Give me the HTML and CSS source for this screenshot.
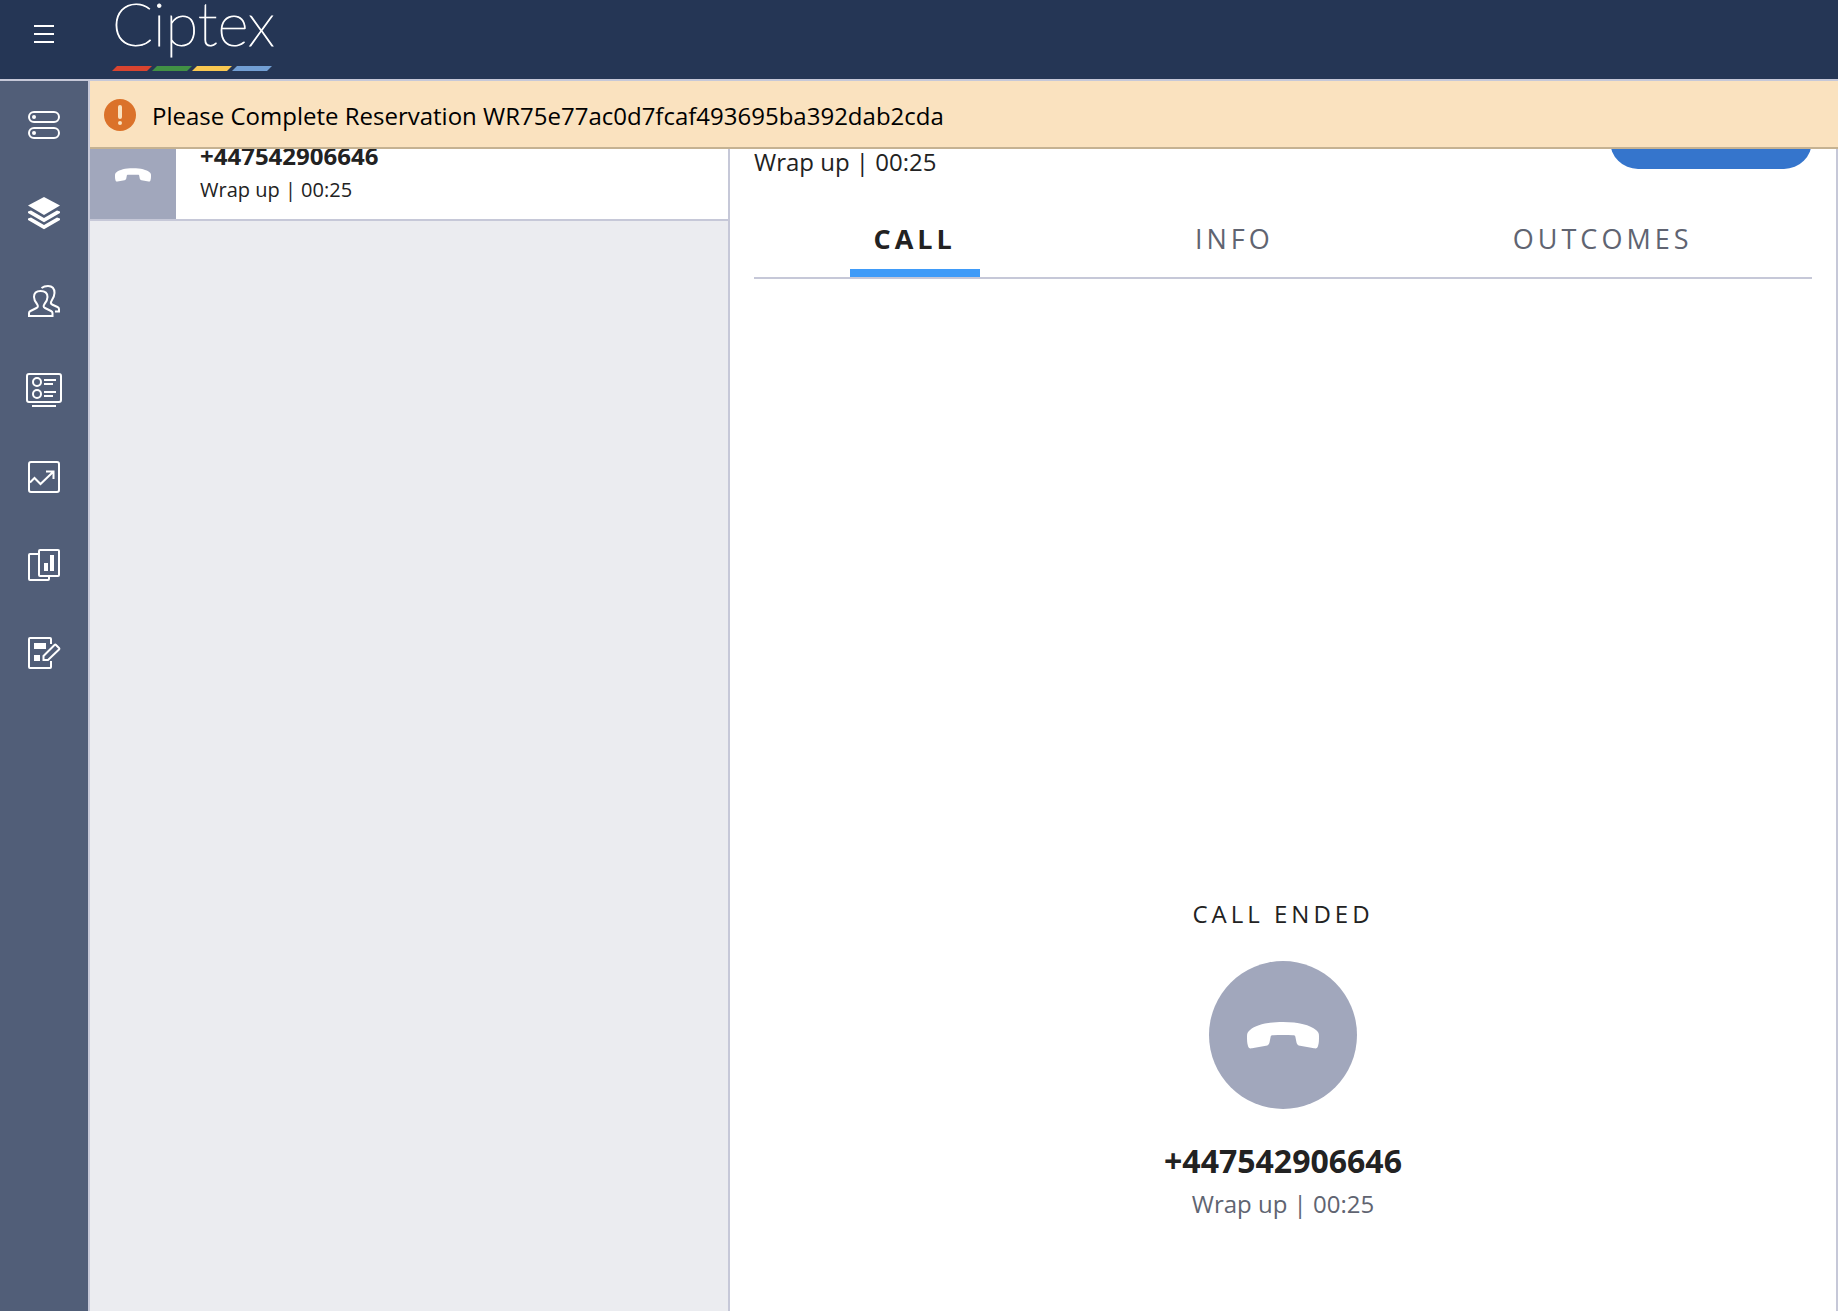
FILE: index.html
```html
<!DOCTYPE html>
<html lang="en">
<head>
    <meta charset="UTF-8">
    <meta name="viewport" content="width=device-width, initial-scale=1.0">
    <title>Ciptex Agent Desktop</title>
    <link rel="stylesheet" href="styles.css">
</head>
<body>

    <svg class="symbols" aria-hidden="true">
        <symbol id="hangup" viewBox="0 0 72 27">
            <path d="M0 14C0 11 1 9.500 3 8C9 3 20 0 36 0S63 3 69 8C71 9.500 72 11 72 14C72 18 72 21 71 24C70.500 26 69.500 26.800 67 26.300L53 23.800C51 23.400 50 22.500 49.500 20.500L48.300 14.500C48 13.500 47.500 13.300 46 13.200C40 12.900 32 12.900 26 13.200C24.500 13.300 24 13.500 23.700 14.500L22.500 20.500C22 22.500 21 23.400 19 23.800L5 26.300C2.500 26.800 1.500 26 1 24C0 21 0 18 0 14Z" fill="currentColor"/>
        </symbol>
    </svg>

    <header class="topbar">
        <button class="menu-button" aria-label="Open menu">
            <span></span>
            <span></span>
            <span></span>
        </button>
        <a class="logo" href="#">
            <span class="logo-name">Ciptex</span>
            <svg class="logo-strip" viewBox="0 0 160 5" aria-hidden="true">
                <path d="M5 0h35l-5 5H0z" fill="#d9442f"/>
                <path d="M45 0h35l-5 5H40z" fill="#419144"/>
                <path d="M85 0h35l-5 5H80z" fill="#f9c851"/>
                <path d="M125 0h35l-5 5H120z" fill="#729fd4"/>
            </svg>
        </a>
    </header>

    <div class="workspace">
        <nav class="sidebar" aria-label="Main">
            <a href="#" aria-label="Overview">
                <svg viewBox="0 0 36 36">
                    <rect x="3" y="5" width="30" height="10" rx="5"/>
                    <rect x="3" y="21" width="30" height="10" rx="5"/>
                    <circle class="solid" cx="8" cy="10" r="2"/>
                    <circle class="solid" cx="8" cy="26" r="2"/>
                </svg>
            </a>
            <a href="#" aria-label="Tasks" aria-current="page">
                <svg viewBox="0 0 36 36">
                    <path class="solid" d="M18 2l16 8.500-16 9.500L2 10.500z"/>
                    <path class="solid" d="M2 16.500L5 15.500 18 23l13-7.500 3 1v1.500L18 27.300 2 18z"/>
                    <path class="solid" d="M2 23.500L5 22.500 18 30l13-7.500 3 1V25L18 34.300 2 25z"/>
                </svg>
            </a>
            <a href="#" aria-label="Teams">
                <svg viewBox="0 0 36 36">
                    <path d="M3 33v-3c0-1 .5-1.500 1.500-2l6-3c2-1 1.500-2.500.5-4-2.500-3-3-5-3-7C8 10 10.500 8 14.500 8S21.500 10 21.500 14c0 2-.5 4-3 7-1 1.500-1.500 3 .5 4l6 3c1 .5 1.500 1 1.500 2v3z"/>
                    <path d="M15.500 5c2-1.500 4-2 6.500-2 4 0 6.500 2 6.500 7 0 2.500-1 5-3 8-1 1.500-1 2.500.5 3.500l5.500 2.500c1 .5 1.500 1 1.500 2v2.500H29"/>
                </svg>
            </a>
            <a href="#" aria-label="Queues">
                <svg viewBox="0 0 36 36">
                    <rect x="1" y="3" width="34" height="28" rx="2"/>
                    <circle cx="11" cy="11" r="4"/>
                    <circle cx="11" cy="23" r="4"/>
                    <path d="M18 9h12M18 13h9M18 21h12M18 25h9M6 35h24"/>
                </svg>
            </a>
            <a href="#" aria-label="Insights">
                <svg viewBox="0 0 36 36">
                    <rect x="3" y="3" width="30" height="30" rx="2"/>
                    <path d="M4 23.500l4.500-4.500 6 6L27 13M20 12.500h7.500V20"/>
                </svg>
            </a>
            <a href="#" aria-label="Reports">
                <svg viewBox="0 0 36 36">
                    <rect x="13" y="3" width="20" height="26" rx="1"/>
                    <path d="M12 7H4c-.6 0-1 .4-1 1v24c0 .6.4 1 1 1h18c.6 0 1-.4 1-1v-3"/>
                    <path class="solid" d="M18 16h4v8h-4zM24 8h4v16h-4z"/>
                </svg>
            </a>
            <a href="#" aria-label="Questionnaires">
                <svg viewBox="0 0 36 36">
                    <path d="M25 9V4c0-.6-.4-1-1-1H4c-.6 0-1 .4-1 1v28c0 .6.4 1 1 1h20c.6 0 1-.4 1-1v-6"/>
                    <path d="M17.500 25v-4L28.500 10c.6-.5 1-.5 1.500 0l3 3c.5.5.5 1 0 1.500L22 25z"/>
                    <path class="solid" d="M8 8h12v6H8zM8 20h6v6H8z"/>
                </svg>
            </a>
        </nav>

        <main class="desktop">
            <div class="notification" role="alert">
                <svg class="notification-icon" viewBox="0 0 32 32" aria-hidden="true">
                    <circle cx="16" cy="16" r="16" fill="#db722a"/>
                    <path d="M16 8v10" stroke="#fae2bf" stroke-width="4" stroke-linecap="round"/>
                    <circle cx="16" cy="24" r="2" fill="#fae2bf"/>
                </svg>
                <span class="notification-text">Please Complete Reservation WR75e77ac0d7fcaf493695ba392dab2cda</span>
            </div>

            <section class="task-list" aria-label="Tasks">
                <button class="task">
                    <span class="task-channel"><svg aria-hidden="true"><use href="#hangup"/></svg></span>
                    <span class="task-text">
                        <strong>+447542906646</strong>
                        <span>Wrap up | 00:25</span>
                    </span>
                </button>
            </section>

            <section class="task-canvas">
                <div class="canvas-header">
                    <p class="canvas-status">Wrap up | 00:25</p>
                    <button class="complete-button" aria-label="Complete"></button>
                </div>

                <div class="tabs" role="tablist">
                    <button class="tab" role="tab" aria-selected="true" aria-controls="callPanel">CALL</button>
                    <button class="tab" role="tab" aria-selected="false">INFO</button>
                    <button class="tab" role="tab" aria-selected="false">OUTCOMES</button>
                </div>

                <div class="call-panel" id="callPanel" role="tabpanel">
                    <p class="call-state">CALL ENDED</p>
                    <div class="call-avatar"><svg aria-hidden="true"><use href="#hangup"/></svg></div>
                    <h2>+447542906646</h2>
                    <p class="call-status">Wrap up | 00:25</p>
                </div>
            </section>
        </main>
    </div>

</body>
</html>
```
FILE: styles.css
```css
* {
    box-sizing: border-box;
}

body {
    margin: 0;
    min-height: 100vh;
    display: flex;
    flex-direction: column;
    font-family: "Open Sans", "Noto Sans", sans-serif;
    font-size: 24px;
    line-height: 32px;
    color: #222222;
    background-color: #ffffff;
}

h2, p {
    margin: 0;
}

button {
    font: inherit;
    color: inherit;
    background: none;
    border: none;
    padding: 0;
    cursor: pointer;
}

.symbols {
    display: none;
}

/* Top bar */
.topbar {
    display: flex;
    height: 81px;
    background-color: #253655;
    border-bottom: 2px solid #c6c8d8;
}

.menu-button {
    display: flex;
    flex-direction: column;
    gap: 6px;
    width: 88px;
    padding: 25px 34px;
}

.menu-button span {
    height: 2px;
    background-color: #ffffff;
}

.logo {
    display: flex;
    flex-direction: column;
    gap: 20px;
    width: 160px;
    margin-left: 24px;
    color: #ffffff;
    text-decoration: none;
}

.logo-name {
    font-family: Lato, sans-serif;
    font-size: 60px;
    font-weight: 100;
    line-height: 46px;
    white-space: nowrap;
    -webkit-text-stroke: 1px #ffffff;
}

.logo-strip {
    display: block;
    flex: none;
    width: 160px;
    height: 5px;
}

/* Side navigation */
.workspace {
    display: flex;
    flex: 1;
}

.sidebar {
    width: 90px;
    background-color: #515e78;
    border-right: 2px solid #c6c8d8;
}

.sidebar a {
    display: flex;
    align-items: center;
    justify-content: center;
    height: 88px;
}

.sidebar svg {
    width: 36px;
    height: 36px;
    fill: none;
    stroke: #ffffff;
    stroke-width: 2;
}

.sidebar .solid {
    fill: #ffffff;
    stroke: none;
}

.desktop {
    position: relative;
    display: flex;
    flex: 1;
}

/* Notification lies over the task list and the canvas */
.notification {
    position: absolute;
    top: 0;
    left: 0;
    right: 0;
    display: flex;
    align-items: center;
    gap: 16px;
    height: 68px;
    padding: 2px 14px 0;
    color: #000000;
    background-color: #fae2bf;
    border-bottom: 2px solid #c5b292;
    z-index: 1;
}

.notification-icon {
    width: 32px;
    height: 32px;
}

.notification-text {
    padding-top: 2px;
}

/* Task list */
.task-list {
    flex: 0 0 640px;
    padding-top: 50px;
    background-color: #ebecf0;
    border-right: 2px solid #c6c8d8;
}

.task {
    display: flex;
    width: 100%;
    height: 90px;
    text-align: left;
    background-color: #ffffff;
    border-bottom: 2px solid #c6c8d8;
}

.task-channel {
    display: flex;
    align-items: center;
    justify-content: center;
    width: 86px;
    height: 100%;
    color: #ffffff;
    background-color: #a1a7bc;
}

.task-channel svg {
    width: 36px;
    height: 14px;
}

.task-text {
    display: flex;
    flex-direction: column;
    gap: 6px;
    padding: 11px 24px;
    font-size: 20px;
    line-height: 28px;
}

.task-text strong {
    font-size: 24px;
}

/* Task canvas */
.task-canvas {
    display: flex;
    flex-direction: column;
    flex: 1;
    padding: 32px 24px 0;
    border-right: 2px solid #c6c8d8;
}

.canvas-header {
    display: flex;
    align-items: flex-start;
    justify-content: space-between;
}

.canvas-status {
    padding-top: 33px;
}

.complete-button {
    width: 202px;
    height: 56px;
    border-radius: 28px;
    background-color: #3575cc;
}

.tabs {
    display: flex;
    justify-content: space-around;
    margin-top: 43px;
    border-bottom: 2px solid #c6c8d8;
}

.tab {
    padding: 0 24px 12px;
    border-bottom: 8px solid transparent;
    font-size: 27px;
    line-height: 36px;
    letter-spacing: 4px;
    color: #606471;
}

.tab[aria-selected="true"] {
    font-weight: 700;
    color: #222222;
    border-bottom-color: #3f9bf8;
}

.call-panel {
    display: flex;
    flex: 1;
    flex-direction: column;
    align-items: center;
    justify-content: flex-end;
    padding-bottom: 91px;
}

.call-state {
    letter-spacing: 4px;
}

.call-avatar {
    display: flex;
    align-items: center;
    justify-content: center;
    width: 148px;
    height: 148px;
    margin: 31px 0 30px;
    border-radius: 50%;
    color: #ffffff;
    background-color: #a1a7bc;
}

.call-avatar svg {
    width: 72px;
    height: 27px;
}

.call-panel h2 {
    font-size: 32px;
    line-height: 44px;
}

.call-status {
    margin-top: 5px;
    color: #606471;
}
```
